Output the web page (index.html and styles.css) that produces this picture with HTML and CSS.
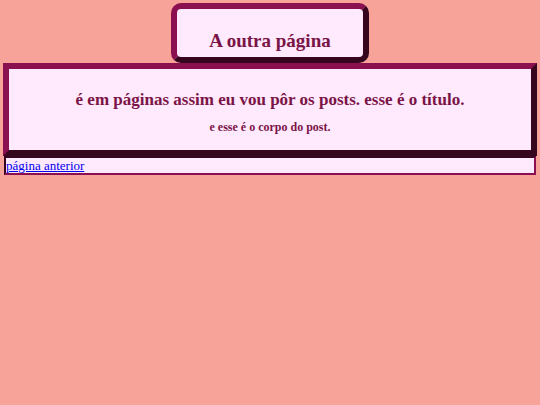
FILE: index.html
```html
<!DOCTYPE html>
<html>
  <head>
    <title>A outra página</title>
    <link rel="stylesheet" href="styles.css">
  </head>
  <body>
    <header class="topo">
      <h1>A outra página</h1>
    </header>

    <div class="post">
      <h2>é em páginas assim eu vou pôr os posts. esse é o título.</h2>
      <p>e esse é o corpo do post.</p>
    </div>

    <div class="navegacao">
      <a href="#">página anterior</a>
    </div>
  </body>
</html>
```

FILE: styles.css
```css
body {
  font-family: "Liberation Serif", "Times New Roman", serif;
  background-color: #f7a39a;
  margin: 3px;
}

.topo {
  width: 186px;
  height: 48px;
  margin: 0 auto;
  background-color: #fee9fd;
  border: 6px outset #8a1050;
  border-radius: 10px;
  text-align: center;
}

.topo h1 {
  margin: 0;
  padding-top: 21px;
  font-size: 19px;
  line-height: 22px;
  color: #7a1446;
}

.post {
  height: 81px;
  background-color: #fee9fd;
  border: 6px outset #8a1050;
  text-align: center;
  color: #7a1446;
}

.post h2 {
  margin: 0;
  padding-top: 21px;
  font-size: 17px;
  line-height: 20px;
}

.post p {
  margin: 10px 0 0;
  font-size: 12px;
  line-height: 14px;
  font-weight: bold;
}

.navegacao {
  margin: 0 1px;
  background-color: #fee9fd;
  border: 2px inset #8a1050;
  line-height: 14px;
}

.navegacao a {
  font-size: 13px;
  color: #0000ee;
}
```
